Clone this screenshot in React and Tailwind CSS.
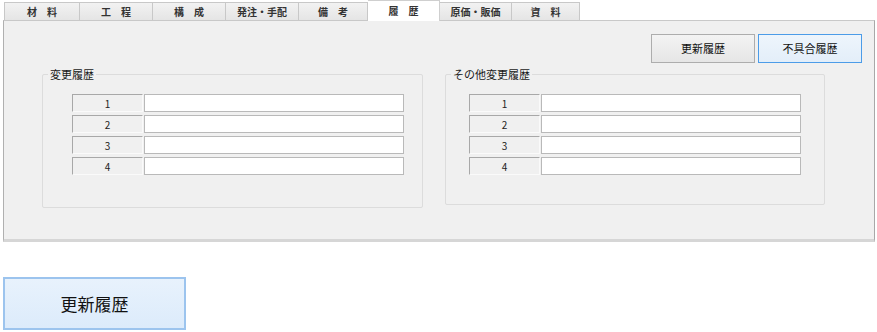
import React from "react";

const tabs = [
  { label: "材　料", w: "w-[76px]" },
  { label: "工　程", w: "w-[73px]" },
  { label: "構　成", w: "w-[73px]" },
  { label: "発注・手配", w: "w-[73px]" },
  { label: "備　考", w: "w-[69px]" },
  { label: "履　歴", w: "w-[72px]", active: true },
  { label: "原価・販価", w: "w-[72px]" },
  { label: "資　料", w: "w-[68px]" },
];

const HistoryGroup = ({ title, boxW, boxH, padL }) => (
  <fieldset
    className={`relative ${boxW} ${boxH} ${padL} border border-[#dcdcdc] rounded-[2px] pt-[19px] flex flex-col`}
  >
    <legend className="absolute -top-[8px] left-[5px] px-[2px] bg-[#f0f0f0] text-[11px] leading-[14px] text-[#1a1a1a]">
      {title}
    </legend>
    <div className="flex flex-col gap-[3px]">
      {[1, 2, 3, 4].map((n) => (
        <div key={n} className="flex h-[18px]">
          <div className="w-[71px] h-full flex items-center justify-center text-[10px] text-[#222] bg-[#f0f0f0] border-t border-l border-[#a8a8a8] border-b border-b-[#fafafa] border-r border-r-[#fafafa]">
            {n}
          </div>
          <div className="w-[260px] h-full bg-white border border-[#b9b9b9] ml-[1px]" />
        </div>
      ))}
    </div>
  </fieldset>
);

export default function App() {
  return (
    <div
      className="w-[877px] h-[332px] bg-white relative overflow-hidden"
      style={{ fontFamily: '"Noto Sans CJK JP", "Noto Sans", sans-serif' }}
    >
      {/* tab strip */}
      <div className="flex items-end h-[21px] pl-[4px]">
        {tabs.map((t) =>
          t.active ? (
            <div
              key={t.label}
              className={`${t.w} h-[21px] bg-white border-t border-r border-[#cfcfcf] flex items-center justify-center text-[10px] font-bold text-[#333] pb-[2px] relative z-10`}
            >
              {t.label}
            </div>
          ) : (
            <div
              key={t.label}
              className={`${t.w} h-[19px] bg-gradient-to-b from-[#f2f2f2] to-[#e5e5e5] border-y border-r border-[#c8c8c8] first:border-l flex items-center justify-center text-[10px] font-bold text-[#333]`}
            >
              {t.label}
            </div>
          )
        )}
      </div>

      {/* panel */}
      <div className="ml-[3px] w-[872px] h-[222px] -mt-px bg-[#f0f0f0] border-t border-t-[#c9c9c9] border-l border-l-[#b0b0b0] border-r border-r-[#a8a8a8] border-b-[3px] border-b-[#d6d6d6] flex flex-col">
        <div className="flex justify-end gap-[3px] pr-[12px] pt-[13px]">
          <button className="w-[104px] h-[29px] bg-gradient-to-b from-[#f3f3f3] to-[#e6e6e6] border border-[#adadad] text-[11px] text-[#111]">
            更新履歴
          </button>
          <button className="w-[104px] h-[29px] bg-gradient-to-b from-[#eef5fc] to-[#e3eef9] border border-[#4c9ce8] text-[11px] text-[#111]">
            不具合履歴
          </button>
        </div>
        <div className="flex gap-[22px] pl-[38px] mt-[11px]">
          <HistoryGroup title="変更履歴" boxW="w-[381px]" boxH="h-[134px]" padL="pl-[29px]" />
          <HistoryGroup title="その他変更履歴" boxW="w-[380px]" boxH="h-[131px]" padL="pl-[23px]" />
        </div>
      </div>

      {/* bottom button */}
      <button className="absolute left-[3px] top-[277px] w-[183px] h-[53px] bg-gradient-to-b from-[#e8f2fc] to-[#dcebfb] border-2 border-[#9cc4ee] text-[17px] text-[#111]">
        更新履歴
      </button>
    </div>
  );
}
